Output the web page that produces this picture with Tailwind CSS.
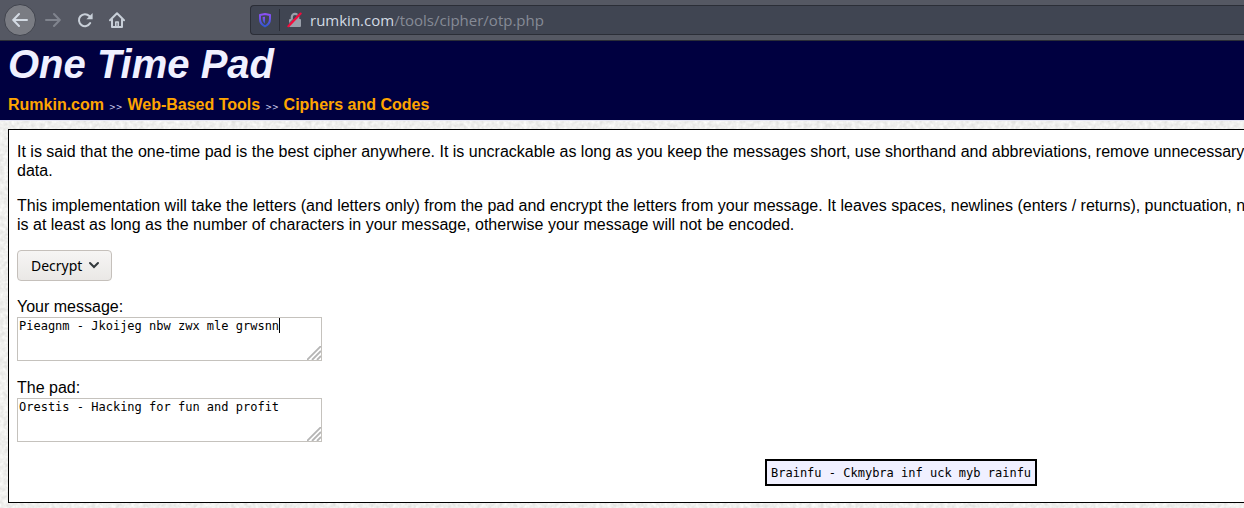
<!DOCTYPE html>
<html lang="en">
<head>
<meta charset="utf-8">
<title>One Time Pad</title>
<script src="https://cdn.jsdelivr.net/npm/@tailwindcss/browser@4"></script>
</head>
<body class="relative isolate flex min-h-screen flex-col overflow-hidden bg-[#f0f0ee] font-['Liberation_Sans',Arial,sans-serif] text-base text-black">
<!-- Paper texture behind the page -->
<svg class="absolute inset-0 -z-10 h-full w-full" aria-hidden="true">
  <filter id="paper" x="0" y="0" width="100%" height="100%" color-interpolation-filters="sRGB">
    <feTurbulence type="fractalNoise" baseFrequency="0.25" numOctaves="3" seed="4"/>
    <feColorMatrix values="0.16 0 0 0 0.858  0.16 0 0 0 0.858  0.16 0 0 0 0.85  0 0 0 0 1"/>
  </filter>
  <rect width="100%" height="100%" filter="url(#paper)"/>
</svg>

<nav class="flex h-[41px] shrink-0 items-center border-b border-[#2b2e37] bg-[#555863] pl-1" aria-label="Browser toolbar">
  <button class="flex size-8 shrink-0 items-center justify-center rounded-full border border-[#41444e] bg-[#7a7c83] text-[#d3dae3]" aria-label="Back">
    <svg class="size-4" viewBox="0 0 16 16" fill="none" stroke="currentColor" stroke-width="2" stroke-linecap="round" stroke-linejoin="round"><path d="M15 8H1.5M7 2L1.2 8L7 14"/></svg>
  </button>
  <button class="ml-[9px] text-[#80848e]" aria-label="Forward">
    <svg class="size-4" viewBox="0 0 16 16" fill="none" stroke="currentColor" stroke-width="2" stroke-linecap="round" stroke-linejoin="round"><path d="M1 8h13.5M9 2l5.8 6L9 14"/></svg>
  </button>
  <button class="ml-4 text-[#c8cfd8]" aria-label="Reload">
    <svg class="size-4" viewBox="0 0 16 16" fill="none"><path d="M13.2 11.1A6 6 0 1 1 12.3 4" stroke="currentColor" stroke-width="2" stroke-linecap="round"/><path d="M15.6 1v6.2H9.4z" fill="currentColor"/></svg>
  </button>
  <button class="ml-4 text-[#c8cfd8]" aria-label="Home">
    <svg class="size-4" viewBox="0 0 16 16" fill="none" stroke="currentColor" stroke-width="2" stroke-linecap="round" stroke-linejoin="round"><path d="M1 8.2L8 1.3l7 6.9M3 7.5V15h10V7.5"/><path d="M6.8 14.5V10h2.4v4.5" stroke-width="1.6"/></svg>
  </button>
  <div class="ml-[125px] flex h-[30px] flex-1 items-center rounded-l-[4px] border border-r-0 border-[#2b2e37] bg-[#404552] pl-2">
    <svg class="h-4 w-3 shrink-0" viewBox="0 0 12 16" fill="none"><defs><linearGradient id="shield" x1="0" y1="0" x2="0" y2="1"><stop stop-color="#8d50f5"/><stop offset="1" stop-color="#3157cf"/></linearGradient></defs><path d="M6 1.9L11 2.9V7C11 10.5 9 13 6 14.4C3 13 1 10.5 1 7V2.9Z" stroke="url(#shield)" stroke-width="2" stroke-linejoin="round"/><path d="M6 4.7v7C4.4 10.3 3.7 8.8 3.7 7V5.1z" fill="url(#shield)"/></svg>
    <span class="ml-2 h-[22px] w-px bg-[#2b2e37]"></span>
    <svg class="ml-[7px] size-4 shrink-0" viewBox="0 0 16 16" fill="none"><path d="M4.8 8V5a3.2 3.2 0 0 1 6.4 0V8" stroke="#9a9faa" stroke-width="2.2"/><rect x="2" y="7" width="12" height="8" rx="1" fill="#9a9faa"/><path d="M0 13.6L13 .6" stroke="#404552" stroke-width="1"/><path d="M1.4 14.2L13.6 1.6" stroke="#f50b3c" stroke-width="2.2" stroke-linecap="round"/></svg>
    <a href="#" class="ml-[7px] font-['Open_Sans','Noto_Sans',sans-serif] text-[15px] leading-5 text-[#868b96]"><span class="text-[#d3dae3]">rumkin.com</span>/tools/cipher/otp.php</a>
  </div>
</nav>

<header class="h-20 shrink-0 border-b border-[#e4e4f4] bg-[#000040] px-2 text-[#f0f0ff]">
  <h1 class="text-[40px] leading-[46px] font-bold italic">One Time Pad</h1>
  <nav class="mt-2 flex items-baseline gap-[5px] leading-[19px] font-bold text-[#ffa500]" aria-label="Breadcrumb">
    <a href="#">Rumkin.com</a>
    <span class="font-['DejaVu_Sans',sans-serif] text-[8px] font-normal text-[#d0d0f0]">&gt;&gt;</span>
    <a href="#">Web-Based Tools</a>
    <span class="font-['DejaVu_Sans',sans-serif] text-[8px] font-normal text-[#d0d0f0]">&gt;&gt;</span>
    <a href="#">Ciphers and Codes</a>
  </nav>
</header>

<main class="mt-2 ml-2 overflow-hidden border border-r-0 border-black bg-white pt-3 pb-4 pl-2 leading-[19px]">
  <p class="overflow-hidden whitespace-nowrap">It is said that the one-time pad is the best cipher anywhere. It is uncrackable as long as you keep the messages short, use shorthand and abbreviations, remove unnecessary<br>data.</p>
  <p class="mt-4 overflow-hidden whitespace-nowrap">This implementation will take the letters (and letters only) from the pad and encrypt the letters from your message. It leaves spaces, newlines (enters / returns), punctuation, n<br>is at least as long as the number of characters in your message, otherwise your message will not be encoded.</p>

  <div class="relative mt-4 w-[95px]">
    <select class="block h-[31px] w-full appearance-none rounded-[4px] border border-[#c5c0bb] bg-linear-to-b from-[#f6f5f4] to-[#eae8e6] pl-[13px] font-['Noto_Sans',sans-serif] text-[14px] leading-5 text-black" aria-label="Mode">
      <option>Decrypt</option>
    </select>
    <svg class="pointer-events-none absolute top-[11px] right-3 h-2 w-3" viewBox="0 0 12 8" fill="none" stroke="#33393c" stroke-width="2" stroke-linecap="round"><path d="M2 2l4 4l4-4"/></svg>
  </div>

  <div class="mt-4">
    <label for="message" class="block">Your message:</label>
    <div class="relative mt-px w-[305px]">
      <textarea id="message" class="block h-11 w-full resize-none overflow-hidden border border-[#c5c2bd] bg-white px-px py-px font-['DejaVu_Sans_Mono',monospace] text-[12px] leading-[14px]">Pieagnm - Jkoijeg nbw zwx mle grwsnn</textarea>
      <span class="absolute top-px left-[262px] h-[15px] w-px bg-black"></span>
      <svg class="pointer-events-none absolute right-px bottom-px size-[14px]" viewBox="0 0 14 14" stroke="#b5b5b5" stroke-width="1.8"><path d="M0 14L14 0M5 14L14 5M10 14L14 10"/></svg>
    </div>
  </div>

  <div class="mt-[17px]">
    <label for="pad" class="block">The pad:</label>
    <div class="relative mt-px w-[305px]">
      <textarea id="pad" class="block h-11 w-full resize-none overflow-hidden border border-[#c5c2bd] bg-white px-px py-px font-['DejaVu_Sans_Mono',monospace] text-[12px] leading-[14px]">Orestis - Hacking for fun and profit</textarea>
      <svg class="pointer-events-none absolute right-px bottom-px size-[14px]" viewBox="0 0 14 14" stroke="#b5b5b5" stroke-width="1.8"><path d="M0 14L14 0M5 14L14 5M10 14L14 10"/></svg>
    </div>
  </div>

  <div class="mt-[17px] ml-[748px] flex">
    <output class="border-2 border-black bg-[#f0f0ff] px-1 pt-[5px] pb-[3px] font-['DejaVu_Sans_Mono',monospace] text-[12px] leading-[15px]">Brainfu - Ckmybra inf uck myb rainfu</output>
  </div>
</main>
</body>
</html>
